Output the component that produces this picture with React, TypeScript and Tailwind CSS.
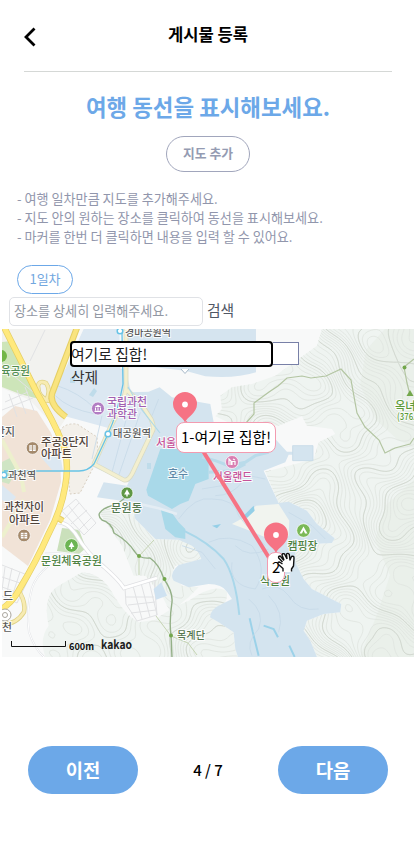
import React from "react";

type Pt = [number, number];

/* Terrain height used for the contour lines. */
function height(x: number, y: number): number {
  return (
    Math.sin(x * 0.036 + 1.2 * Math.sin(y * 0.024)) * 1.3 +
    Math.cos(y * 0.039 + 1.2 * Math.sin(x * 0.026)) * 1.3 +
    0.32 * Math.sin(x * 0.1 + y * 0.06) +
    0.26 * Math.cos(y * 0.14 - x * 0.08) +
    x * 0.016
  );
}

/* Marching squares over the terrain. */
function contours(step: number, offset: number): string {
  const cell = 3;
  let d = "";
  for (let y = 329; y < 657; y += cell) {
    for (let x = 2; x < 414; x += cell) {
      const c: Pt[] = [[x, y], [x + cell, y], [x + cell, y + cell], [x, y + cell]];
      const h = c.map(([a, b]) => height(a, b));
      const lo = Math.ceil((Math.min(...h) - offset) / step);
      const hi = Math.floor((Math.max(...h) - offset) / step);
      for (let k = lo; k <= hi; k++) {
        const level = k * step + offset;
        const p: string[] = [];
        for (let i = 0; i < 4; i++) {
          const j = (i + 1) % 4;
          if (h[i] < level !== h[j] < level) {
            const t = (level - h[i]) / (h[j] - h[i]);
            p.push(`${(c[i][0] + t * (c[j][0] - c[i][0])).toFixed(1)} ${(c[i][1] + t * (c[j][1] - c[i][1])).toFixed(1)}`);
          }
        }
        for (let i = 0; i + 1 < p.length; i += 2) d += `M${p[i]}L${p[i + 1]}`;
      }
    }
  }
  return d;
}

const FINE = contours(0.27, 0);
const BOLD = contours(1.62, 0);

/* Hill outlines, in thirds of a map unit from the map's corner. */
const HILLS =
  "M960 0L945 50L890 90L820 140L750 165L690 175L655 200L660 240L640 262L700 290L830 290L900 262L915 290L990 300L1000 315L950 340L935 390L880 405L790 428L830 522L870 522L915 545L945 585L998 628L990 642L930 645L880 660L880 700L905 750L930 780L1018 825L1015 850L965 855L915 875L905 905L925 935L945 984H1236V0Z" +
  "M240 730Q300 735 330 790Q370 860 410 880L460 872Q500 840 560 815Q640 760 675 788Q680 830 628 865L650 880L695 910L700 960L708 984H130Q110 930 140 890Q120 800 170 770Z" +
  "M290 548L390 520L400 570L460 630L530 632Q595 650 598 690L520 710L510 735L540 770L590 775L560 805L505 850L480 800L430 740L395 740L360 650Z" +
  "M690 585L735 560L762 530L830 525L862 575L860 620L790 625L730 600Z";

interface LabelProps {
  x: number;
  y: number;
  size?: number;
  color?: string;
  w?: number;
  children: string;
}

function Label({ x, y, size = 11, color = "#5b5b5b", w, children }: LabelProps) {
  return (
    <text
      x={x}
      y={y}
      fontSize={size}
      fill={color}
      fontWeight={500}
      stroke="#ffffff"
      strokeWidth={2}
      strokeOpacity={0.85}
      paintOrder="stroke"
      textLength={w}
      lengthAdjust="spacingAndGlyphs"
    >
      {children}
    </text>
  );
}

function Pin({ x, y }: { x: number; y: number }) {
  return (
    <g transform={`translate(${x} ${y})`}>
      <path d="M0 18C-2.5 12-12 8.500-12-.5A12 12 0 0 1 12-.5C12 8.500 2.500 12 0 18Z" fill="#f67384" />
      <circle r="2.900" fill="#fff" />
    </g>
  );
}

function Station({ x, y }: { x: number; y: number }) {
  return <circle cx={x} cy={y} r="2.800" fill="#fff" stroke="#67c3e6" strokeWidth="1.500" />;
}

function Apartment({ x, y }: { x: number; y: number }) {
  return (
    <g transform={`translate(${x} ${y})`}>
      <circle r="6.300" fill="#a58a6c" stroke="#fff" strokeWidth=".7" />
      <path d="M-3.200-2.700H-.4V3H-3.200ZM.4-2.700H3.200V3H.4Z" fill="#fff" />
      <path d="M-2.800-1H2.800M-2.800 1H2.800" stroke="#a58a6c" strokeWidth=".6" />
    </g>
  );
}

function Tree({ x, y, r, color }: { x: number; y: number; r: number; color: string }) {
  return (
    <g transform={`translate(${x} ${y})`}>
      <circle r={r} fill={color} stroke="#fff" strokeWidth=".7" />
      <path d="M0-3.700L2.900 1.500H.7V3.500H-.7V1.500H-2.900Z" fill="#fff" />
    </g>
  );
}

function MapCanvas() {
  return (
    <svg viewBox="2 329 412 328" className="block h-full w-full">
      <defs>
        <clipPath id="hills"><path d={HILLS} transform="translate(2 329) scale(.3333)" /></clipPath>
      </defs>
      <rect x="2" y="329" width="412" height="328" fill="#f8f9f9" />
      <path d="M2 329H78L52 400L66 418L58 430L30 400L2 388Z" fill="#f2f2ef" />
      <g clipPath="url(#hills)">
        <rect x="2" y="329" width="412" height="328" fill="#eff4f1" />
        <path d="M385 329L366 350L360 385L376 420L398 440L414 448V329ZM414 480L386 505L375 540L390 575L378 612L360 657H414Z" fill="#e6ede6" opacity=".6" />
        <path d={FINE} fill="none" stroke="#dfe5e0" strokeWidth=".8" />
        <path d={BOLD} fill="none" stroke="#cfd5cd" strokeWidth=".8" />
      </g>

      {/* parks and housing blocks */}
      <path d="M2 342L12 341L24 372L39 399L20 394L2 387Z" fill="#cde5b9" />
      <path d="M2 417L15 406L37 411L51 433L60 456L61 482L50 520L28 566L2 546Z" fill="#f1e3d7" />
      <path d="M40 456L60 453L63 471H53Z" fill="#dce8f2" />
      <path d="M2 462L12 457L16 472L9 484L2 482Z" fill="#cfe5c4" />
      <path d="M2 485L16 497L10 505L2 500Z" fill="#dce8f2" />
      <path d="M2 440L21 475L24 492M2 537L24 500" fill="none" stroke="#edf0cd" strokeWidth="4" />
      <path d="M60 431Q64 423 77 424L97 437L98 456L93 468L80 493L70 494L66 453Z" fill="#f3f0ea" stroke="#d8cfc1" strokeDasharray="2 2" />
      <path d="M62 528L79 530L86 548L79 554L57 551Z" fill="#cae0bb" />
      <g fill="none" stroke="#e1e2e4" strokeWidth="1">
        <path d="M5 402L28 392M2 410L33 398M9 394L17 417M17 390L26 414M25 387L34 411M62 511L76 499L96 523L84 535ZM65 518L79 503M71 524L87 510M78 531L92 517M68 505L88 530M125 588L154 579L157 615L137 621L126 604ZM126 597H154M128 605L155 602M131 613L156 610M133 586L142 619M141 583L150 617M149 581L157 615" />
        <path d="M2 565L30 576L17 603L2 596M5 567L2 590M12 568L6 597M20 572L11 600M2 577L26 585M2 587L22 594M45 330L30 361M2 366L45 402" />
      </g>
      <path d="M53 523Q64 519 75 533Q88 555 104 567Q118 579 124 588L157 578" fill="none" stroke="#dedfe2" strokeWidth="4.200" />
      <path d="M53 523Q64 519 75 533Q88 555 104 567Q118 579 124 588L157 578" fill="none" stroke="#fff" strokeWidth="2.800" />
      <path d="M45 553Q75 554 91 556M48 566Q36 576 32 588Q26 610 29 632Q34 648 44 657" fill="none" stroke="#e3e5e8" strokeWidth="2" />
      <path d="M45 553Q75 554 91 556M48 566Q36 576 32 588Q26 610 29 632Q34 648 44 657" fill="none" stroke="#fff" strokeWidth="1" />

      {/* park grounds and water */}
      <g transform="translate(2 329) scale(.3333)">
        <path d="M245 0H352L355 120H370L385 180L415 220L460 295L380 460L275 415L330 300L190 262L150 225V180L190 120Z" fill="#dce8f2" />
        <path d="M400 0H762V130Q700 150 610 142L550 125L460 115H370V0Z" fill="#d5e4ef" />
        <path d="M380 190L440 188L473 175L510 205L625 225L635 280L820 330L855 368H872V350H933V395H872V377H860L850 400L785 425L830 522L860 518L915 545L945 585L998 628L990 642L930 645L880 660L880 700L905 750L930 780L1018 825L1015 850L965 855L915 875L905 905L925 935L945 984H708L700 960L695 910L650 880L624 865Q625 840 660 825L690 810L675 788Q660 765 620 765L560 775L515 755Q500 735 530 708L598 690Q590 665 570 650L530 632L460 630L400 570L390 520L285 505L305 460L375 470L440 330L455 290Z" fill="#d4e4ef" />
        <path d="M690 585L735 560L762 530L830 525L862 575L860 620L790 625L730 600Z" fill="#f1f4ef" />
        <path d="M475 360H590L620 400V450L580 465L560 515L535 525L510 540L438 500L433 482Z" fill="#a9d9e9" />
        <path d="M476 540L510 552L530 580L550 600V630L520 625L490 600Z" fill="#a9d9e9" />
        <path d="M390 520L470 538L525 555" fill="none" stroke="#e4edf4" strokeWidth="8" />
        <path d="M600 385L640 395L680 410L730 400L760 380L800 370M620 430L690 425L730 405" fill="none" stroke="#b9dbea" strokeWidth="9" />
        <path d="M545 605Q620 640 665 690Q700 740 712 858" fill="none" stroke="#a9d7ea" strokeWidth="6" />
        <path d="M743 868L752 908L770 980M785 890L815 900L828 925M862 950L878 984" fill="none" stroke="#9cd2e9" strokeWidth="6" />
        <path d="M725 560L755 530L758 545L735 567ZM630 590L657 585L645 598Z" fill="#94cfe7" />
        <path d="M455 780L478 760L495 800L462 812Z" fill="#cfe2f1" />
        <g fill="none" stroke="#c7dae8" strokeWidth="2.500">
          <path d="M872 350H933V395H872ZM165 170Q230 190 280 240M300 260L270 390M385 225L330 430M415 250L350 440M160 200Q200 240 280 255" />
          <path d="M530 570Q580 500 630 510Q700 510 710 560Q740 600 790 650M620 640Q680 610 750 650Q800 720 760 780Q680 770 690 700M700 650Q740 690 800 660M860 550L930 590L970 630M780 780Q830 760 860 800Q890 850 950 840M740 810Q790 850 770 900Q730 940 750 980M800 800Q850 850 830 910M600 480L660 470L740 440L790 450M640 500Q690 500 720 460M470 210L450 260M540 650L600 670L640 720" />
        </g>
      </g>
      <g fill="#bfdcea">
        <path d="M89 395L94 388L97 391L93 397ZM70 378H75V383H70ZM147 463H151V469H147ZM205 433H209V439H205Z" />
      </g>

      {/* trails */}
      <path d="M127 495Q122 503 108 507Q94 513 102 520Q112 523 114 533Q128 541 135 552Q139 559 150 558Q159 564 164 579Q173 592 172 602Q169 622 171 635L172 657" fill="none" stroke="#94b088" strokeWidth="1.400" />
      <path d="M154 540L139 556V575M156 616L171 636L188 643L197 655" fill="none" stroke="#c5d4b3" />
      <path d="M246 423L254 414V403L269 392L278 386L287 378L302 376L311 378L326 376L341 369L351 380L357 413L365 427L379 440L385 453L395 448L410 444L414 438M404 367L407 383L410 395M404 367L414 359" fill="none" stroke="#b3c5a2" strokeWidth="1.200" />
      <g fill="#73a74c">
        <circle cx="139" cy="556" r="2" /><circle cx="164.500" cy="579" r="2" /><circle cx="171" cy="635.500" r="2" /><circle cx="404.500" cy="367.500" r="2" /><path d="M410 390L413.500 396H406.500Z" />
      </g>

      {/* roads */}
      <g fill="none" strokeLinejoin="round">
        <path d="M50 401Q38 398 38 386Q39 380 46 383Q52 391 45 402M18 590Q26 601 24 612Q16 625 2 624" stroke="#ded184" strokeWidth="4.500" />
        <path d="M50 401Q38 398 38 386Q39 380 46 383Q52 391 45 402M18 590Q26 601 24 612Q16 625 2 624" stroke="#f7ebb2" strokeWidth="3" />
        <path d="M78 325L53 391Q47 403 66 417M3 325L21 361L37 393Q54 422 62 442Q70 461 65 487Q61 511 48 535Q37 560 19 590Q12 603 0 610M55 516L63 521" stroke="#e5cf65" strokeWidth="6.400" />
        <path d="M78 325L53 391Q47 403 66 417M55 516L63 521" stroke="#f9e47f" strokeWidth="4.300" />
        <path d="M3 325L21 361L37 393Q54 422 62 442Q70 461 65 487Q61 511 48 535Q37 560 19 590Q12 603 0 610" stroke="#ffe97d" strokeWidth="5" />
        <path d="M126 329V387Q126 397 111 426L94 464L124 480Q128 481 132 474L152 432Q155 428 151 419L142 405L127 390" stroke="#d9dbc4" strokeWidth="4.800" />
        <path d="M126 329V387Q126 397 111 426L94 464L124 480Q128 481 132 474L152 432Q155 428 151 419L142 405L127 390" stroke="#f3efcf" strokeWidth="3.200" />
        <path d="M122 333L123 384Q118 412 108 434L94 464Q88 471 79 471H4" stroke="#67c3e6" strokeWidth="1.300" />
        <path d="M128 387L142 410L160 433" stroke="#add9e9" strokeWidth="1.200" />
      </g>
      <Station x={120} y={331} />
      <Station x={108} y={434} />
      <Station x={4} y={475} />
      <circle cx="5" cy="615" r="6" fill="#fff" stroke="#aaa69d" />
      <circle cx="5" cy="615" r="2.500" fill="none" stroke="#aaa69d" />

      {/* places */}
      <Apartment x={32.5} y={448} />
      <Apartment x={24} y={535.5} />
      <Tree x={71.5} y={545.5} r={6.8} color="#6cb552" />
      <Tree x={127} y={493} r={6} color="#5f9845" />
      <circle cx="1" cy="356" r="6" fill="#73b646" />
      <g transform="translate(98 408.500)">
        <circle r="6.500" fill="#b27dc3" stroke="#fff" strokeWidth=".7" />
        <path d="M-3.500-1.500L0-3.700L3.500-1.500ZM-3.500 2.200H3.500V3.400H-3.500ZM-3-1H-2V2H-3ZM-.5-1H.5V2H-.5ZM2-1H3V2H2Z" fill="#fff" />
      </g>
      <g transform="translate(232 462)">
        <circle r="6.500" fill="#d97fb2" stroke="#fff" strokeWidth=".7" />
        <path d="M-3 3V-3L-1-1V3M0 3V-.5H3V3M1-3L3-2" fill="none" stroke="#fff" strokeWidth="1.200" />
      </g>
      <g transform="translate(303.500 530.500)">
        <circle r="6.800" fill="#7bb957" stroke="#fff" strokeWidth=".7" />
        <path d="M0-4L4 3H1.500L0-.2L-1.500 3H-4Z" fill="#fff" />
      </g>
      <path d="M181 369L185 373.500L189 369" fill="#fff" stroke="#a8bac9" />

      <Label x={125} y={335.5} size={10.5} w={46}>경마공원역</Label>
      <Label x={1} y={375} color="#4f8c50" w={29}>육공원</Label>
      <Label x={107} y={406} color="#a15fb1" w={40}>국립과천</Label>
      <Label x={107} y={418} color="#a15fb1" w={30}>과학관</Label>
      <Label x={113} y={437} size={10.5} w={38}>대공원역</Label>
      <Label x={-5} y={436} w={20}>단지</Label>
      <Label x={41} y={445.5} size={11.5} color="#50443b" w={48}>주공8단지</Label>
      <Label x={41} y={457.5} size={11.5} color="#50443b" w={31}>아파트</Label>
      <Label x={8} y={478.5} size={10.5} w={28}>과천역</Label>
      <Label x={4} y={511} size={11.5} color="#50443b" w={40}>과천자이</Label>
      <Label x={9} y={523.5} size={11.5} color="#50443b" w={31}>아파트</Label>
      <Label x={111} y={511.5} color="#537951" w={31}>문원동</Label>
      <Label x={41} y={565} size={11.5} color="#4f8343" w={61}>문원체육공원</Label>
      <Label x={3} y={600} w={10}>드</Label>
      <Label x={2} y={630.5} size={10} w={10}>천</Label>
      <Label x={177} y={639} size={10.5} color="#56764f" w={28}>목계단</Label>
      <Label x={168} y={478} color="#5c87a6" w={20}>호수</Label>
      <Label x={156} y={447} color="#c65399" w={20}>서울</Label>
      <Label x={213} y={481} color="#c65399" w={39}>서울랜드</Label>
      <Label x={287.5} y={549.5} color="#4d803d" w={30}>캠핑장</Label>
      <Label x={260} y={585} color="#4d803d" w={30}>식물원</Label>
      <Label x={395} y={410} size={11.5} color="#5c9b39" w={31}>옥녀봉</Label>
      <Label x={397} y={420} size={9.5} color="#5c9b39" w={33}>(376.4m)</Label>

      {/* scale and provider mark */}
      <path d="M11.500 641V646.500H65.500V641" fill="none" stroke="#111" />
      <text x="69" y="650" fontSize="9.500" fontWeight="700" fill="#111" textLength="25" lengthAdjust="spacingAndGlyphs">600m</text>
      <text x="101" y="649" fontSize="12" fontWeight="700" fill="#202020" textLength="31" lengthAdjust="spacingAndGlyphs">kakao</text>

      {/* route */}
      <path d="M185 422L276 569" stroke="#f67384" strokeWidth="4" />
      <Pin x={185} y={404.5} />
      <Pin x={276} y={535} />
    </svg>
  );
}

function HandCursor() {
  return (
    <svg viewBox="0 0 20 22" className="absolute top-[223px] left-[274px] h-[22px] w-5">
      <path d="M7 20V16.500L2.500 12.500Q1 10 3.500 10L6.500 12L2.700 6Q2 4 4.200 4L7 7L6 3Q6.500 1 8.500 2L10.500 6V2Q12 .5 13.300 2.500L14.300 7L15.500 4.500Q18 3.500 18 6L17.500 14L15.500 17V20Z" fill="#fff" />
      <path d="M7 19.500V16.500L2.500 12.500Q1 10 3.500 10L6.500 12M6.500 10L2.700 6Q2 4 4.200 4L8 8.500M8 8L6 3Q6.500 1 8.500 2L11 7M11 7L10.500 2Q12 .5 13.300 2.500L14 8L15.500 4.500Q18 3.500 18 6L17.500 14L15.500 17V19.500" fill="none" stroke="#111" strokeWidth="1.400" strokeLinejoin="round" />
    </svg>
  );
}

export default function App() {
  return (
    <main className="flex h-[866px] w-[416px] flex-col overflow-hidden bg-white font-['Noto_Sans_CJK_KR','Noto_Sans',sans-serif]">
      <header className="mx-6 grid h-[72px] grid-cols-[1fr_auto_1fr] border-b border-[#d5d8d6]">
        <svg viewBox="0 0 12 20" className="mt-[27px] h-5 w-3" fill="none" stroke="#000" strokeWidth="2.800">
          <path d="M10.500 1.500L2 10L10.500 18.500" />
        </svg>
        <h1 className="mt-[22px] text-[16.600px] leading-6 font-bold text-black">게시물 등록</h1>
      </header>

      <section className="flex flex-col items-center">
        <h2 className="mt-[18px] h-8 text-[22.400px] leading-8 font-bold whitespace-nowrap text-[#6ca8e8]">여행 동선을 표시해보세요.</h2>
        <button className="mt-[14px] h-9 w-[84px] rounded-full border border-[#a1a6bc] pb-0.5 text-[12.800px] leading-5 font-bold text-[#949bb2]">지도 추가</button>
      </section>

      <ul className="mt-[17px] ml-[17px] text-[13.100px] leading-[19px] whitespace-nowrap text-[#9196ac]">
        <li>- 여행 일차만큼 지도를 추가해주세요.</li>
        <li>- 지도 안의 원하는 장소를 클릭하여 동선을 표시해보세요.</li>
        <li>- 마커를 한번 더 클릭하면 내용을 입력 할 수 있어요.</li>
      </ul>

      <div className="mt-[19px] ml-[17px] flex h-[29px] w-14 items-center justify-center rounded-full border border-[#6ca8e8] pb-px text-[13px] leading-5 text-[#72a7df]">1일차</div>

      <div className="mt-[3px] ml-[9px] flex h-[29px] shrink-0 items-center gap-1">
        <div className="flex h-[29px] w-[194px] items-center rounded-[5px] border border-[#e0e2e6] pb-0.5 pl-1 text-[13.100px] leading-5 text-[#9298a4]">장소를 상세히 입력해주세요.</div>
        <button className="pb-1 text-[14.800px] leading-5 text-[#505765]">검색</button>
      </div>

      <section className="relative mt-[3px] ml-0.5 h-[328px] w-[412px] shrink-0 overflow-hidden">
        <MapCanvas />
        <div className="absolute top-3 left-[68px] flex items-start">
          <div className="flex h-[26px] w-[203px] items-center rounded-[4px] border-2 border-black bg-white pb-px text-[14.800px] leading-5 text-[#222]">
            <span className="-ml-px">여기로 집합!</span>
          </div>
          <div className="mt-px h-[23px] w-[26px] border border-l-0 border-[#7880a7] bg-white" />
        </div>
        <span className="absolute top-9 left-[69px] text-[14.800px] leading-6 text-[#333]">삭제</span>
        <div className="absolute top-[93px] left-[174px] flex h-[31px] w-[100px] items-center justify-center rounded-[8px] border border-[#f39bb0] bg-white text-[14.900px] whitespace-nowrap text-black">1-여기로 집합!</div>
        <div className="absolute top-[223px] left-[265px] flex h-[31px] w-[18px] items-center justify-center rounded-[8px] border border-[#f39bb0] bg-white text-[14.800px] text-black">2</div>
        <HandCursor />
      </section>

      <footer className="mt-[89px] ml-7 flex h-12 w-[360px] shrink-0 items-center justify-between">
        <button className="h-12 w-[110px] rounded-full bg-[#6ca8e8] text-[18.800px] leading-6 font-bold text-white">이전</button>
        <span className="text-[15px] font-medium text-black">4 / 7</span>
        <button className="h-12 w-[110px] rounded-full bg-[#6ca8e8] text-[18.800px] leading-6 font-bold text-white">다음</button>
      </footer>
    </main>
  );
}
